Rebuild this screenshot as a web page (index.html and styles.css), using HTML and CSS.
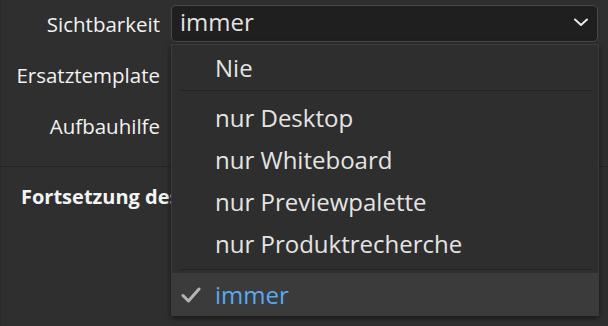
FILE: index.html
```html
<!DOCTYPE html>
<html lang="de">
<head>
<meta charset="utf-8">
<link rel="stylesheet" href="styles.css">
</head>
<body>
<div class="panel">
  <div class="form">
    <div class="label">Sichtbarkeit</div>
    <div class="select">
      <span class="select-value">immer</span>
      <svg class="chevron" width="14" height="9" viewBox="0 0 14 9"><path d="M1 1.5 L7 7 L13 1.5" fill="none" stroke="#e8e8e8" stroke-width="2" stroke-linecap="round" stroke-linejoin="round"/></svg>
    </div>
    <div class="label">Ersatztemplate</div>
    <div></div>
    <div class="label">Aufbauhilfe</div>
    <div></div>
  </div>
  <div class="divider"></div>
  <div class="section-title">Fortsetzung des Templates</div>

  <div class="menu">
    <div class="item first">Nie</div>
    <div class="sep"></div>
    <div class="group">
      <div class="item">nur Desktop</div>
      <div class="item">nur Whiteboard</div>
      <div class="item">nur Previewpalette</div>
      <div class="item">nur Produktrecherche</div>
    </div>
    <div class="sep last-sep"></div>
    <div class="item selected">
      <svg class="check" width="20" height="16" viewBox="0 0 20 16"><path d="M2 8.5 L7.5 14 L18 2" fill="none" stroke="#b4b4b4" stroke-width="3" stroke-linecap="round" stroke-linejoin="round"/></svg>
      <span>immer</span>
    </div>
  </div>
</div>
</body>
</html>
```

FILE: styles.css
```css
* { box-sizing: border-box; }
html, body { margin: 0; padding: 0; }
body {
  width: 608px;
  height: 326px;
  overflow: hidden;
  background: #2f2f2f;
  font-family: "Open Sans", "DejaVu Sans", sans-serif;
  color: #eeeeee;
}
.panel {
  position: relative;
  width: 608px;
  height: 326px;
  border-left: 1px solid #2a2a2a;
}
.form {
  display: grid;
  grid-template-columns: 159px 427px;
  column-gap: 11px;
  grid-auto-rows: 37px;
  row-gap: 14px;
  padding-top: 5px;
}
.label {
  display: flex;
  align-items: center;
  justify-content: flex-end;
  font-size: 20.5px;
  font-weight: 500;
  color: #f2f2f2;
  white-space: nowrap;
}
.select {
  display: flex;
  align-items: center;
  justify-content: space-between;
  background: #1f1f1f;
  border: 1.5px solid #4a4a4a;
  border-radius: 5px;
  padding: 0 9px 0 8px;
  font-size: 24px;
  font-weight: 500;
  color: #e2e2e2;
}
.select-value { line-height: 1; margin-top: -3px; }
.chevron { margin-top: -2px; }
.divider {
  margin-top: 22px;
  height: 1px;
  background: #242424;
}
.section-title {
  margin-top: 17px;
  margin-left: 20px;
  width: 150px;
  overflow: hidden;
  line-height: 26px;
  font-size: 20px;
  font-weight: 700;
  color: #f4f4f4;
  white-space: nowrap;
}
.menu {
  position: absolute;
  left: 170px;
  top: 44px;
  width: 428px;
  height: 272px;
  background: #2e2e2e;
  border: 1px solid #3c3c3c;
  box-shadow: 0 2px 6px rgba(0, 0, 0, 0.55);
  padding-top: 2px;
  display: flex;
  flex-direction: column;
}
.item {
  height: 42px;
  display: flex;
  align-items: center;
  padding-left: 43px;
  font-size: 24px;
  font-weight: 500;
  color: #e4e4e4;
  white-space: nowrap;
}
.item.first { height: 41px; }
.sep {
  margin: 2px 6px 6px 7px;
  height: 1px;
  background: #242424;
}
.sep.last-sep { margin: 4px 6px 4px 7px; }
.selected {
  margin: 0 -1px -1px -1px;
  height: 43px;
  padding-left: 10px;
  background: #3b3b3b;
  color: #5aa9f0;
}
.check { margin-right: 14px; margin-top: 1px; }
```
